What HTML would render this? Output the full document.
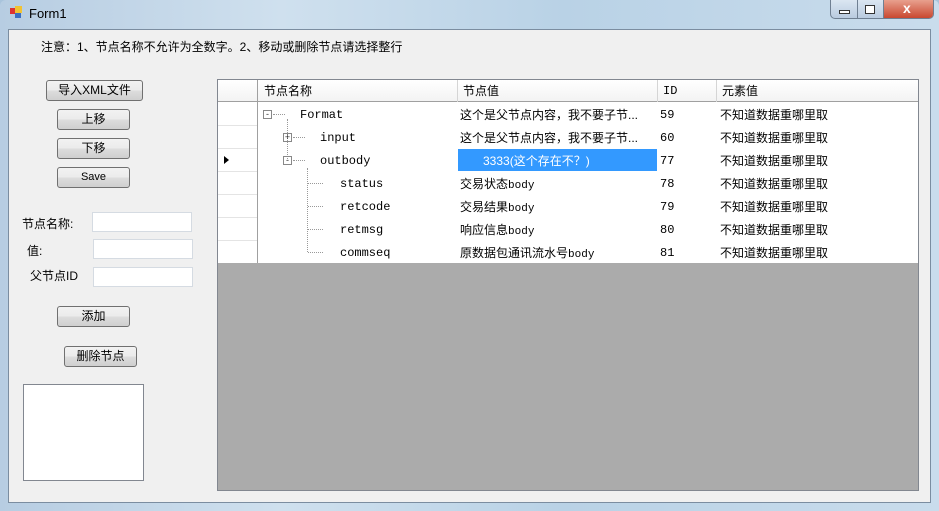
<!DOCTYPE html>
<html><head><meta charset="utf-8"><style>
*{margin:0;padding:0;box-sizing:border-box}
body{width:939px;height:511px;overflow:hidden;background:#a9c4dc;font-family:"Liberation Sans","Noto Sans CJK SC",sans-serif;font-size:12px;color:#000;position:relative}
.a{position:absolute}
.frame{left:0;top:0;width:939px;height:511px;background:linear-gradient(90deg,#b7cde2,#cfe0ee 30%,#b9d2e6 60%,#c9dcec);border-radius:6px 6px 0 0}
.client{left:8px;top:29px;width:923px;height:474px;background:#f0f0f0;border:1px solid #7b8da0}
.btn{position:absolute;border:1px solid #707070;border-radius:3px;background:linear-gradient(#f2f2f2,#ebebeb 50%,#dddddd 51%,#cfcfcf);text-align:center;font-size:12px;line-height:19px}
.tb{position:absolute;background:#fff;border:1px solid #d5dbe2;height:20px}
.mono{font-family:"Liberation Mono","Noto Sans CJK SC",monospace;font-size:11px}
.cell{position:absolute;font-size:12px;line-height:23px;white-space:nowrap;margin-top:2px}
</style></head><body>
<div class="a frame"></div>
<div class="a" style="left:10px;top:8px;width:6px;height:6px;background:#d33"></div>
<div class="a" style="left:15px;top:6px;width:7px;height:7px;background:#f1c232"></div>
<div class="a" style="left:15px;top:13px;width:6px;height:5px;background:#3b6fc2"></div>
<div class="a" style="left:29px;top:6px;font-size:13px">Form1</div>
<div class="a" style="left:830px;top:0;width:104px;height:19px;border:1px solid #6f7f92;border-top:none;border-radius:0 0 5px 5px;background:linear-gradient(#dbe6f2,#b9cbe0);overflow:hidden">
 <div class="a" style="left:26px;top:0;width:1px;height:19px;background:#6f7f92"></div>
 <div class="a" style="left:52px;top:0;width:1px;height:19px;background:#6f7f92"></div>
 <div class="a" style="left:53px;top:0;width:51px;height:19px;background:linear-gradient(#e8a08e,#c7432b)"></div>
 <div class="a" style="left:8px;top:10px;width:11px;height:4px;border:1px solid #333;background:#fff"></div>
 <div class="a" style="left:34px;top:5px;width:10px;height:9px;border:1px solid #333;background:#fff"></div>
 <div class="a" style="left:72px;top:0;color:#fff;font-weight:bold;font-size:14px">x</div>
</div>
<div class="a client"></div>
<div class="a" style="left:41px;top:38px;font-size:12px">注意：1、节点名称不允许为全数字。2、移动或删除节点请选择整行</div>

<div class="btn" style="left:46px;top:80px;width:97px;height:21px">导入XML文件</div>
<div class="btn" style="left:57px;top:109px;width:73px;height:21px">上移</div>
<div class="btn" style="left:57px;top:138px;width:73px;height:21px">下移</div>
<div class="btn" style="left:57px;top:167px;width:73px;height:21px;font-size:11px">Save</div>
<div class="a" style="left:22px;top:215px">节点名称:</div>
<div class="tb" style="left:92px;top:212px;width:100px"></div>
<div class="a" style="left:27px;top:242px">值:</div>
<div class="tb" style="left:93px;top:239px;width:100px"></div>
<div class="a" style="left:30px;top:267px">父节点ID</div>
<div class="tb" style="left:93px;top:267px;width:100px"></div>
<div class="btn" style="left:57px;top:306px;width:73px;height:21px">添加</div>
<div class="btn" style="left:64px;top:346px;width:73px;height:21px">删除节点</div>
<div class="a" style="left:23px;top:384px;width:121px;height:97px;background:#fff;border:1px solid #828790"></div>

<div class="a" style="left:217px;top:79px;width:702px;height:412px;background:#ababab;border:1px solid #828790"></div>
<div class="a" style="left:218px;top:80px;width:700px;height:183px;background:#fff"></div>
<div class="a" style="left:218px;top:80px;width:700px;height:22px;background:linear-gradient(#fff,#f3f3f3);border-bottom:1px solid #a0a0a0"></div>
<div class="a" style="left:257px;top:80px;width:1px;height:183px;background:#a0a0a0"></div>
<div class="a" style="left:457px;top:80px;width:1px;height:22px;background:#d5d5d5"></div>
<div class="a" style="left:657px;top:80px;width:1px;height:22px;background:#d5d5d5"></div>
<div class="a" style="left:716px;top:80px;width:1px;height:22px;background:#d5d5d5"></div>
<div class="cell" style="left:264px;top:78px">节点名称</div>
<div class="cell" style="left:463px;top:78px">节点值</div>
<div class="cell mono" style="left:663px;top:78px">ID</div>
<div class="cell" style="left:722px;top:78px">元素值</div>
<div class="a" style="left:218px;top:125px;width:39px;height:1px;background:#e4e4e4;box-shadow:0 23px #e4e4e4,0 46px #e4e4e4,0 69px #e4e4e4,0 92px #e4e4e4,0 115px #e4e4e4"></div>
<div class="a" style="left:224px;top:156px;width:0;height:0;border-left:5px solid #000;border-top:4px solid transparent;border-bottom:4px solid transparent"></div>
<div class="a" style="left:458px;top:149px;width:199px;height:22px;background:#3399ff"></div>
<div class="a" style="left:263px;top:110px;width:9px;height:9px;border:1px solid #888;font-size:9px;line-height:6px;text-align:center;color:#333">-</div>
<div class="a" style="left:273px;top:114px;width:12px;border-top:1px dotted #999"></div>
<div class="a" style="left:287px;top:119px;height:40px;border-left:1px dotted #999"></div>
<div class="a" style="left:283px;top:133px;width:9px;height:9px;border:1px solid #888;font-size:9px;line-height:7px;text-align:center;color:#333">+</div>
<div class="a" style="left:293px;top:137px;width:12px;border-top:1px dotted #999"></div>
<div class="a" style="left:283px;top:156px;width:9px;height:9px;border:1px solid #888;font-size:9px;line-height:6px;text-align:center;color:#333">-</div>
<div class="a" style="left:293px;top:160px;width:12px;border-top:1px dotted #999"></div>
<div class="a" style="left:307px;top:168px;height:84px;border-left:1px dotted #999"></div>
<div class="a" style="left:308px;top:183px;width:15px;border-top:1px dotted #999"></div>
<div class="a" style="left:308px;top:206px;width:15px;border-top:1px dotted #999"></div>
<div class="a" style="left:308px;top:229px;width:15px;border-top:1px dotted #999"></div>
<div class="a" style="left:308px;top:252px;width:15px;border-top:1px dotted #999"></div>
<div class="cell mono" style="left:300px;top:102px">Format</div>
<div class="cell mono" style="left:320px;top:125px">input</div>
<div class="cell mono" style="left:320px;top:148px">outbody</div>
<div class="cell mono" style="left:340px;top:171px">status</div>
<div class="cell mono" style="left:340px;top:194px">retcode</div>
<div class="cell mono" style="left:340px;top:217px">retmsg</div>
<div class="cell mono" style="left:340px;top:240px">commseq</div>

<div class="cell" style="left:460px;top:102px">这个是父节点内容，我不要子节...</div>
<div class="cell" style="left:460px;top:125px">这个是父节点内容，我不要子节...</div>
<div class="cell" style="left:483px;top:148px;color:#fff">3333(这个存在不？)</div>
<div class="cell" style="left:460px;top:171px">交易状态<span class="mono">body</span></div>
<div class="cell" style="left:460px;top:194px">交易结果<span class="mono">body</span></div>
<div class="cell" style="left:460px;top:217px">响应信息<span class="mono">body</span></div>
<div class="cell" style="left:460px;top:240px">原数据包通讯流水号<span class="mono">body</span></div>

<div class="cell mono" style="left:660px;top:102px">59</div>
<div class="cell mono" style="left:660px;top:125px">60</div>
<div class="cell mono" style="left:660px;top:148px">77</div>
<div class="cell mono" style="left:660px;top:171px">78</div>
<div class="cell mono" style="left:660px;top:194px">79</div>
<div class="cell mono" style="left:660px;top:217px">80</div>
<div class="cell mono" style="left:660px;top:240px">81</div>

<div class="cell" style="left:720px;top:102px">不知道数据重哪里取</div>
<div class="cell" style="left:720px;top:125px">不知道数据重哪里取</div>
<div class="cell" style="left:720px;top:148px">不知道数据重哪里取</div>
<div class="cell" style="left:720px;top:171px">不知道数据重哪里取</div>
<div class="cell" style="left:720px;top:194px">不知道数据重哪里取</div>
<div class="cell" style="left:720px;top:217px">不知道数据重哪里取</div>
<div class="cell" style="left:720px;top:240px">不知道数据重哪里取</div>
</body></html>
